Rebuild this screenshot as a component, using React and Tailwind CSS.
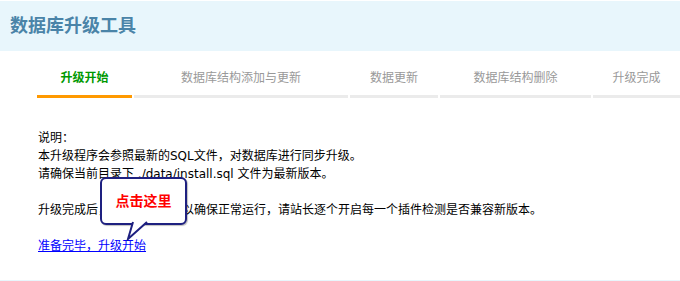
import React from 'react';

const tabs = [
  { label: '升级开始', width: 'w-[95px]', active: true },
  { label: '数据库结构添加与更新', width: 'w-[214px]' },
  { label: '数据更新', width: 'w-[88px]' },
  { label: '数据库结构删除', width: 'w-[151px]' },
  { label: '升级完成', width: 'w-[87px]' },
];

const StepTab = ({ label, width, active }) => (
  <div className={`${width} shrink-0 flex flex-col`}>
    <div
      className={`h-[18px] leading-[18px] text-center ${
        active ? 'text-[#009900] font-bold' : 'text-[#999999]'
      }`}
    >
      {label}
    </div>
    <div className={`mt-[9px] h-[3px] ${active ? 'bg-[#ff9900]' : 'bg-[#ebebeb]'}`} />
  </div>
);

const App = () => {
  return (
    <div className="relative w-[680px] h-[281px] overflow-hidden bg-white text-[12px] text-black font-['DejaVu_Sans','Noto_Sans_CJK_SC',sans-serif]">
      {/* Header */}
      <div className="mt-px h-[50px] bg-[#e8f6fc] pl-[10px] pt-[11px]">
        <h1 className="text-[18px] leading-[24px] font-bold text-[#4a84a8] font-['Noto_Sans_CJK_SC',sans-serif]">
          数据库升级工具
        </h1>
      </div>

      {/* Steps */}
      <div className="flex gap-[2px] pl-[37px] pt-[17px] font-['Noto_Sans_CJK_SC',sans-serif]">
        {tabs.map((t) => (
          <StepTab key={t.label} {...t} />
        ))}
      </div>

      {/* Body */}
      <div className="pl-[38px] pt-[31px] leading-[18px]">
        <p>说明：</p>
        <p>本升级程序会参照最新的SQL文件，对数据库进行同步升级。</p>
        <p>请确保当前目录下 ./data/install.sql 文件为最新版本。</p>
        <p className="h-[18px]" />
        <p>升级完成后，请先关闭插件以确保正常运行，请站长逐个开启每一个插件检测是否兼容新版本。</p>
        <p className="h-[18px]" />
        <p>
          <a href="#" className="text-[#0000ff] underline">准备完毕，升级开始</a>
        </p>
      </div>

      {/* Footer strip */}
      <div className="mt-[25px] h-[10px] bg-[#e8f6fc]" />

      {/* Callout bubble */}
      <div className="absolute left-[100px] top-[177px] w-[87px] h-[48px]">
        <div className="w-full h-full rounded-[6px] border-2 border-[#1e2080] bg-white shadow-[1px_1px_1px_rgba(0,0,0,0.25)] pt-[11px] text-center">
          <span className="text-[14px] leading-[20px] font-bold text-[#ff0000] font-['Noto_Sans_CJK_SC',sans-serif]">
            点击这里
          </span>
        </div>
        <svg className="absolute left-[26px] top-[44px]" width="24" height="20" viewBox="0 0 24 20">
          <polygon points="7,0 21,0 2,18" fill="#ffffff" />
          <polyline points="7,1 2,18 21,1" fill="none" stroke="#1e2080" strokeWidth="2" strokeLinejoin="miter" />
        </svg>
      </div>
    </div>
  );
};

export default App;
